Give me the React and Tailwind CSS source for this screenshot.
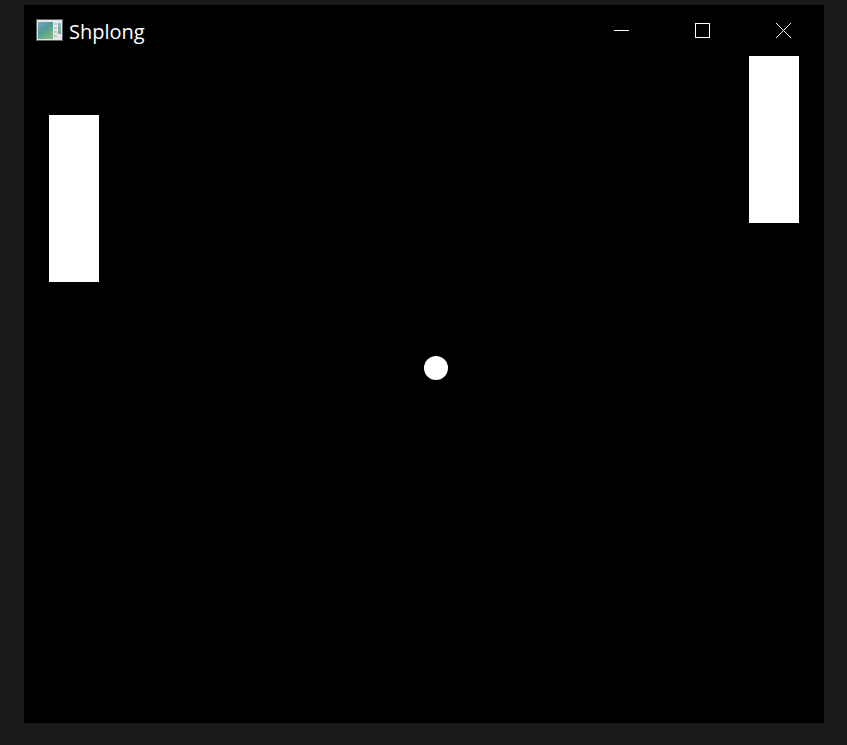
import React from 'react';

const WindowIcon = () => (
  <svg width="27" height="22" viewBox="0 0 27 22" className="shrink-0 mt-[-1px]">
    <defs>
      <linearGradient id="pane" x1="0" y1="0" x2="0.6" y2="1">
        <stop offset="0" stopColor="#7aa6c6" />
        <stop offset="0.5" stopColor="#519c98" />
        <stop offset="1" stopColor="#7db583" />
      </linearGradient>
      <linearGradient id="side" x1="0" y1="0" x2="0" y2="1">
        <stop offset="0" stopColor="#8fb4cc" />
        <stop offset="1" stopColor="#70ab8c" />
      </linearGradient>
    </defs>
    <rect x="0" y="0" width="27" height="22" fill="#5f6263" />
    <rect x="1" y="1" width="25" height="20" fill="#e4e7e7" />
    <rect x="2" y="3" width="15" height="17" fill="url(#pane)" />
    <rect x="18" y="4" width="3" height="2" fill="#c2c8c8" />
    <rect x="18" y="8" width="3" height="2" fill="#c2c8c8" />
    <rect x="18" y="12" width="3" height="2" fill="#c2c8c8" />
    <rect x="18" y="16" width="3" height="2" fill="#c2c8c8" />
    <rect x="22" y="4" width="3" height="11" fill="url(#side)" />
  </svg>
);

const TitleButton = ({ children }) => (
  <div className="w-[81px] h-[51px] flex items-center justify-center text-white">
    {children}
  </div>
);

const App = () => {
  return (
    <div className="w-[847px] h-[745px] bg-[#1a1a1a] pl-[24px] pt-[5px] overflow-hidden">
      <div className="relative w-[800px] h-[718px] bg-black">
        {/* Title bar */}
        <div className="flex items-center h-[51px]">
          <div className="flex items-center flex-1 pl-[12px] gap-[6px] text-white">
            <WindowIcon />
            <span className="text-[20px] leading-none mt-[2px] font-['Open_Sans',sans-serif]">Shplong</span>
          </div>
          <TitleButton>
            <svg width="15" height="15" viewBox="0 0 15 15" shapeRendering="crispEdges">
              <path d="M0 7.5H15" stroke="currentColor" fill="none" />
            </svg>
          </TitleButton>
          <TitleButton>
            <svg width="15" height="15" viewBox="0 0 15 15" shapeRendering="crispEdges">
              <rect x="0.5" y="0.5" width="14" height="14" stroke="currentColor" fill="none" />
            </svg>
          </TitleButton>
          <TitleButton>
            <svg width="15" height="15" viewBox="0 0 15 15">
              <path d="M0 0L15 15M15 0L0 15" stroke="currentColor" strokeWidth="1" fill="none" />
            </svg>
          </TitleButton>
        </div>

        {/* Game canvas */}
        <div className="absolute left-[25px] top-[110px] w-[50px] h-[167px] bg-white" />
        <div className="absolute left-[725px] top-[51px] w-[50px] h-[167px] bg-white" />
        <div className="absolute left-[400px] top-[351px] w-[24px] h-[24px] rounded-full bg-white" />
      </div>
    </div>
  );
};

export default App;
